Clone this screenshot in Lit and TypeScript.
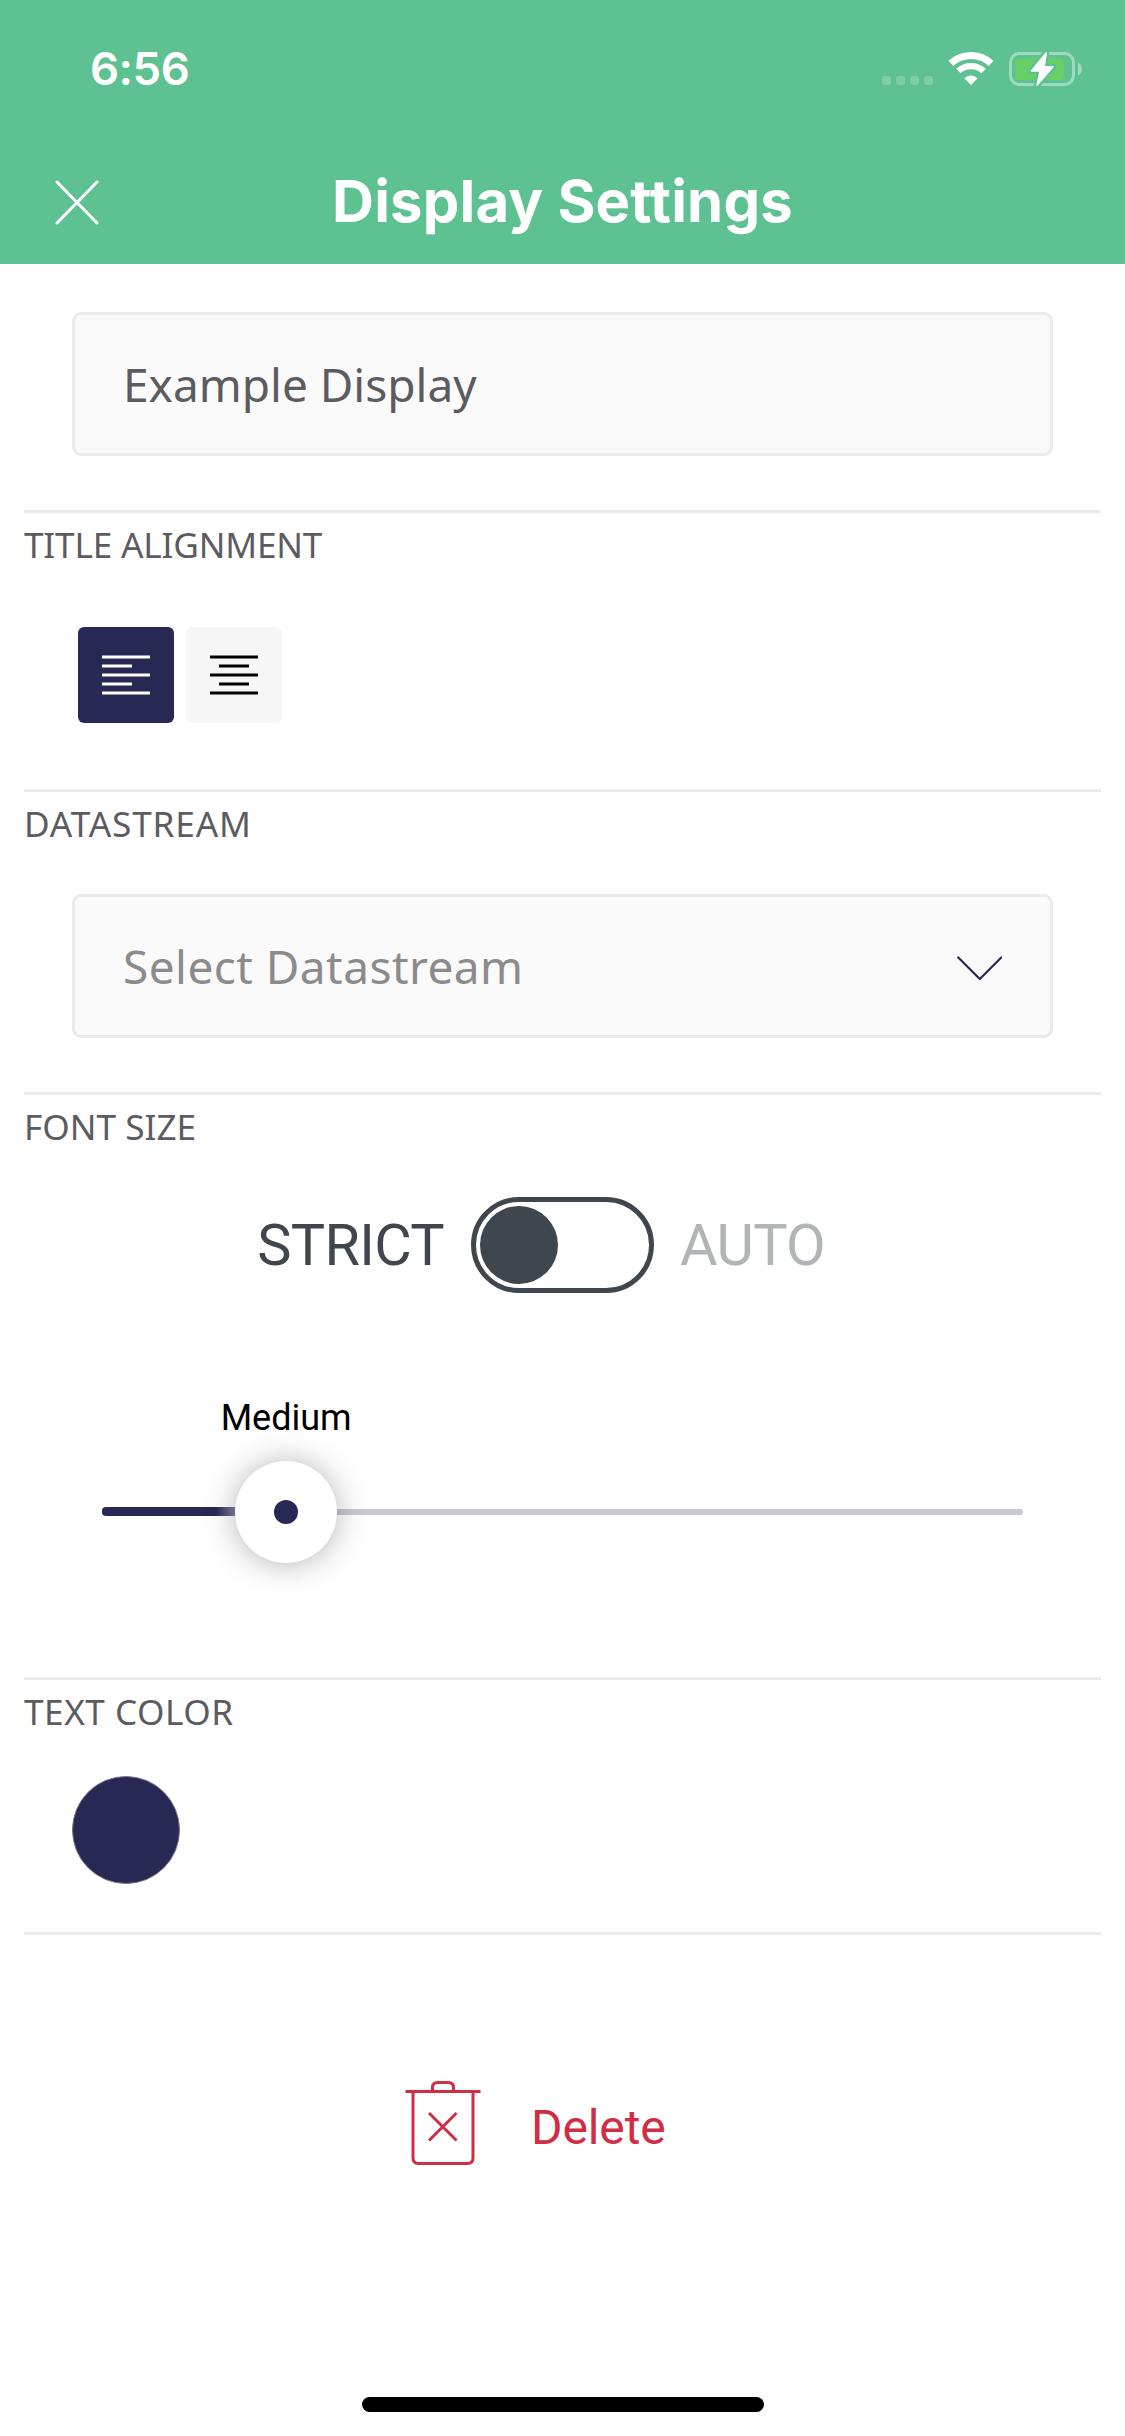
import { LitElement, html, css, svg } from "lit";
import { customElement, property, state } from "lit/decorators.js";
import { classMap } from "lit/directives/class-map.js";

@customElement("status-bar")
class StatusBar extends LitElement {
  static styles = css`
    :host { display: flex; align-items: center; height: 138px; padding: 0 42px 0 90px; box-sizing: border-box; color: #fff; }
    .time { flex: 1; font: 600 45.5px/60px Inter, sans-serif; letter-spacing: -0.5px; }
    .icons { display: flex; align-items: flex-start; height: 36px; }
    .dots { display: flex; gap: 5px; padding-top: 25px; }
    .dot { width: 9px; height: 9px; border-radius: 3px; background: rgba(255, 255, 255, 0.2); }
    .wifi { width: 46px; height: 34px; margin: 1px 15px 0 15px; }
    .battery { width: 74px; height: 36px; }
  `;
  render() {
    return html`
      <div class="time">6:56</div>
      <div class="icons">
        <div class="dots">${[0, 1, 2, 3].map(() => html`<span class="dot"></span>`)}</div>
        <svg class="wifi" viewBox="0 0 46 34" fill="none" stroke="#fff">
          <path d="M2.9 11.4A29.5 29.5 0 0 1 43.1 11.4" stroke-width="7" />
          <path d="M10.4 19A18.8 18.8 0 0 1 35.6 19" stroke-width="6.4" />
          <path d="M23 33L16.3 26.2A10 10 0 0 1 29.7 26.2Z" fill="#fff" stroke="none" />
        </svg>
        <svg class="battery" viewBox="0 0 74 36">
          <rect x="1.5" y="2.5" width="63" height="31" rx="9" fill="none" stroke="#fff" stroke-opacity="0.4" stroke-width="3" />
          <rect x="6" y="7" width="49" height="22" rx="4" fill="#68cf67" />
          <path d="M69 11.5C74.3 14 74.3 22 69 24.5Z" fill="#fff" fill-opacity="0.4" />
          <path d="M37.3 1.3L22 20.2H31L27.8 35L44.4 15.6H35.2Z" fill="#5ec192" stroke="#5ec192" stroke-width="6" stroke-linejoin="round" />
          <path d="M37.3 1.7L22.4 20H31L28 34.4L44 15.8H35.2Z" fill="#fff" stroke="#fff" stroke-width="1.4" stroke-linejoin="round" />
        </svg>
      </div>
    `;
  }
}

@customElement("nav-header")
class NavHeader extends LitElement {
  static styles = css`
    :host { display: grid; grid-template-columns: 1fr auto 1fr; align-items: center; height: 126px; padding: 0 55px; box-sizing: border-box; color: #fff; }
    .close { width: 44px; height: 45px; margin-top: 3px; }
    .title { font: 700 58px/72px Inter, "Open Sans", sans-serif; letter-spacing: 0.2px; white-space: nowrap; }
  `;
  @property() title = "";
  render() {
    return html`
      <svg class="close" viewBox="0 0 44 45" fill="none" stroke="#fff" stroke-width="3" stroke-linecap="round">
        <path d="M2 2L42 43M42 2L2 43" />
      </svg>
      <div class="title">${this.title}</div>
    `;
  }
}

@customElement("settings-section")
class SettingsSection extends LitElement {
  static styles = css`
    :host { display: block; box-sizing: border-box; margin: 0 24px; border-top: 3px solid #ebebeb; padding-top: 7px; }
    .label { font: 400 35.2px/48px "Noto Sans", "Open Sans", sans-serif; color: #5c5b5f; text-transform: uppercase; }
  `;
  @property() label = "";
  @property({ type: Number }) tracking = 0;
  render() {
    return html`<div class="label" style="letter-spacing:${this.tracking}px">${this.label}</div><slot></slot>`;
  }
}

@customElement("size-slider")
class SizeSlider extends LitElement {
  static styles = css`
    :host { display: block; }
    .caption { display: flex; height: 42px; margin-bottom: 22px; }
    .caption span { font: 400 36px/42px Roboto, sans-serif; color: #000; transform: translateX(-50%); }
    .rail { position: relative; display: flex; align-items: center; height: 102px; }
    .track { flex: 1; height: 6px; border-radius: 3px; background: #c9c8d6; }
    .fill { position: absolute; left: 0; top: 46.4px; height: 8.6px; border-radius: 4px; background: linear-gradient(90deg, #272854 62%, #c9c8d6 80%); }
    .knob { position: absolute; top: 0; width: 102px; height: 102px; margin-left: -51px; border-radius: 50%; background: #fff; box-shadow: 0 1px 32px rgba(0, 0, 0, 0.3); display: flex; align-items: center; justify-content: center; }
    .dot { width: 24px; height: 24px; border-radius: 50%; background: #272854; }
  `;
  @property({ type: Number }) value = 0;
  @property() caption = "";
  render() {
    return html`
      <div class="caption"><span style="margin-left:${this.value}%">${this.caption}</span></div>
      <div class="rail">
        <div class="track"></div>
        <div class="fill" style="width:${this.value}%"></div>
        <div class="knob" style="left:${this.value}%"><span class="dot"></span></div>
      </div>
    `;
  }
}

const alignIcon = (inset: number) => svg`
  ${[2, 20, 38].map((y) => svg`<path d="M0 ${y}H48" />`)}
  ${[11, 29].map((y) => svg`<path d="M${inset} ${y}h30" />`)}
`;

@customElement("app-root")
class AppRoot extends LitElement {
  static styles = css`
    :host { display: flex; flex-direction: column; height: 2436px; background: #fff; overflow: hidden; }
    .top { background: #5ec192; height: 264px; flex: none; }
    .field { display: flex; align-items: center; justify-content: space-between; height: 144px; box-sizing: border-box; padding: 0 48px; border: 3px solid #ebebeb; border-radius: 9px; background: #fafafa; font: 400 46px/64px "Noto Sans", "Open Sans", sans-serif; color: #5c5b5f; }
    .name { margin: 48px 72px 54px; }
    .select { margin: 47px 48px 54px; color: #8b8b8c; letter-spacing: 0.45px; }
    .chevron { width: 45px; height: 24px; margin-top: 3px; }
    .aligns { display: flex; gap: 12px; margin: 59px 54px 66px; }
    .align { display: flex; align-items: center; justify-content: center; width: 96px; height: 96px; border-radius: 6px; background: #f6f6f6; color: #000; }
    .align.on { background: #272854; color: #fff; }
    .align svg { width: 48px; height: 40px; fill: none; stroke: currentColor; stroke-width: 3; }
    .mode { display: grid; grid-template-columns: 1fr auto 1fr; align-items: center; gap: 27px; margin-top: 47px; font: 400 57.6px/96px Roboto, sans-serif; color: #40464e; letter-spacing: -0.65px; }
    .strict { text-align: right; padding-top: 1px; margin-bottom: -1px; }
    .auto { color: #b2b5b8; padding-top: 1px; margin: 0 0 -1px -1px; }
    .toggle { width: 183px; height: 96px; box-sizing: border-box; border: 5px solid #40464e; border-radius: 48px; padding: 4px; }
    .thumb { width: 78px; height: 78px; border-radius: 50%; background: #40464e; }
    .slider { margin: 104px 78px 114px; }
    .swatch { width: 108px; height: 108px; box-sizing: border-box; margin: 41px 48px 48px; border-radius: 50%; border: 1px solid #77777f; background: #272854; }
    .delete { display: flex; gap: 50px; margin-top: 145px; padding-left: 405px; color: #cf2e45; }
    .end { height: 3px; flex: none; margin: 0 24px; background: #ebebeb; }
    .trash { width: 76px; height: 87px; fill: none; stroke: currentColor; stroke-width: 3; }
    .delete-text { font: 400 48px/96px Roboto, sans-serif; letter-spacing: -0.1px; }
    .home { width: 402px; height: 15px; flex: none; margin: auto auto 24px 362px; border-radius: 8px; background: #000; }
  `;

  @state() private alignment: "left" | "center" = "left";

  render() {
    return html`
      <div class="top">
        <status-bar></status-bar>
        <nav-header .title=${"Display Settings"}></nav-header>
      </div>
      <div class="field name">Example Display</div>
      <settings-section label="Title Alignment" tracking="-0.2">
        <div class="aligns">
          ${(["left", "center"] as const).map((a) => html`
            <div class=${classMap({ align: true, on: this.alignment === a })} @click=${() => (this.alignment = a)}>
              <svg viewBox="0 0 48 40">${alignIcon(a === "left" ? 0 : 9)}</svg>
            </div>`)}
        </div>
      </settings-section>
      <settings-section label="Datastream" tracking="0.85">
        <div class="field select">
          <span>Select Datastream</span>
          <svg class="chevron" viewBox="0 0 45 24" fill="none" stroke="#272854" stroke-width="2.2" stroke-linecap="round" stroke-linejoin="round">
            <path d="M1.3 1.5L22.8 23L44.3 1.5" />
          </svg>
        </div>
      </settings-section>
      <settings-section label="Font Size">
        <div class="mode">
          <span class="strict">STRICT</span>
          <div class="toggle"><div class="thumb"></div></div>
          <span class="auto">AUTO</span>
        </div>
        <size-slider class="slider" .value=${20} caption="Medium"></size-slider>
      </settings-section>
      <settings-section label="Text Color" tracking="0.5">
        <div class="swatch"></div>
      </settings-section>
      <div class="end"></div>
      <div class="delete">
        <svg class="trash" viewBox="0 0 76 87">
          <path d="M0.5 11.5H75.5" />
          <path d="M27.5 11V7.5Q27.5 2.5 32.5 2.5H43.5Q48.5 2.5 48.5 7.5V11" />
          <path d="M8 11.5V78Q8 83.5 13.5 83.5H62.5Q68 83.5 68 78V11.5" />
          <path d="M24 33L51.5 60.5M51.5 33L24 60.5" />
        </svg>
        <span class="delete-text">Delete</span>
      </div>
      <div class="home"></div>
    `;
  }
}
